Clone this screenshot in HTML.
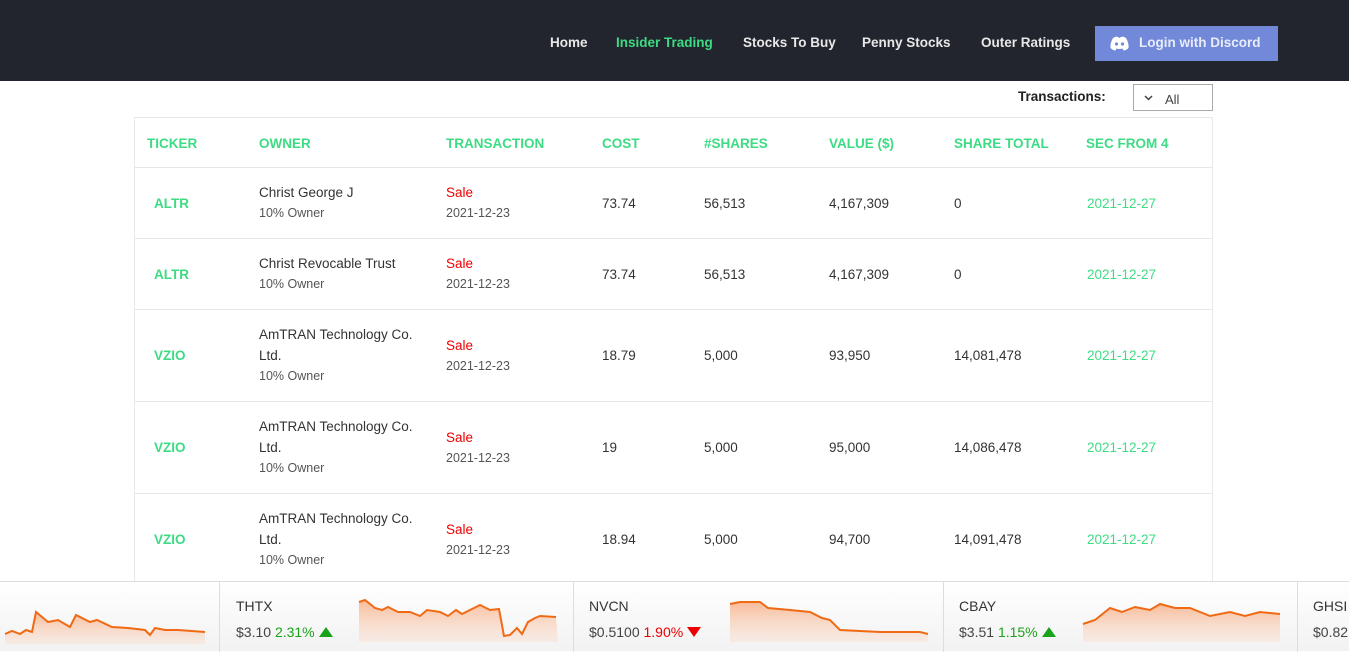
<!DOCTYPE html>
<html><head><style>
*{margin:0;padding:0;box-sizing:border-box}
body{width:1349px;height:651px;overflow:hidden;background:#fff;font-family:"Liberation Sans",sans-serif;position:relative;color:#333}
.nav{position:absolute;left:0;top:0;width:1349px;height:81px;background:#23252e}
.nav a{position:absolute;top:35px;color:#e8e8e8;font-weight:bold;font-size:13.5px;text-decoration:none}
.btn{position:absolute;left:1095px;top:26px;width:183px;height:35px;background:#7289da;color:#e8ecf8;font-weight:bold;font-size:13.5px;padding:9px 0 0 44px}
.tr{position:absolute;left:1018px;top:89px;font-weight:bold;font-size:13.5px;color:#222}
.sel{position:absolute;left:1133px;top:84px;width:80px;height:27px;border:1px solid #aaa;font-size:13px;color:#444;padding:7px 0 0 31px}
.tbl{position:absolute;left:134px;top:117px;width:1079px;height:470px;border:1px solid #e8e8e8;border-bottom:none}
.h{position:absolute;top:136px;color:#3ddc84;font-weight:bold;font-size:13.5px}
.line{position:absolute;left:135px;width:1077px;height:1px;background:#e6e6e6}
.c{position:absolute;font-size:13.5px;color:#333}
.tk{color:#3ddc84;font-weight:bold}
.sm{font-size:12.5px;color:#555}
.sale{color:#e00}
.g{color:#3ddc84}
.bar{position:absolute;left:0;top:581px;width:1349px;height:70px;background:linear-gradient(#fff,#f2f2f2);border-top:1px solid #ddd}
.sep{position:absolute;top:0;width:1px;height:70px;background:#ddd}
.sym{position:absolute;top:16px;font-size:14px;color:#333}
.pr{position:absolute;top:42px;font-size:14px;color:#444}
.up{display:inline-block;width:0;height:0;border-left:7px solid transparent;border-right:7px solid transparent;border-bottom:10px solid #1aa31a;vertical-align:0}
.dn{display:inline-block;width:0;height:0;border-left:7px solid transparent;border-right:7px solid transparent;border-top:10px solid #e00;vertical-align:0}
</style></head><body>
<div class="nav">
<a style="left:550px">Home</a>
<a style="left:616px;color:#3ddc84">Insider Trading</a>
<a style="left:743px">Stocks To Buy</a>
<a style="left:862px">Penny Stocks</a>
<a style="left:981px">Outer Ratings</a>
<div class="btn"><svg style="position:absolute;left:15px;top:10px" width="19" height="15" viewBox="0 0 19 15"><path d="M3 2 Q6 0 8 1 L9.5 2 L11 1 Q13 0 16 2 Q19 7 18.5 12 Q16 14.5 13.5 14.5 L12.5 12.5 Q9.5 13.5 6.5 12.5 L5.5 14.5 Q3 14.5 .5 12 Q0 7 3 2Z" fill="#fff"/><circle cx="6.5" cy="8" r="1.6" fill="#7289da"/><circle cx="12.5" cy="8" r="1.6" fill="#7289da"/></svg>Login with Discord</div>
</div>
<div class="tr">Transactions:</div>
<div class="sel"><svg style="position:absolute;left:10px;top:10px" width="9" height="6" viewBox="0 0 9 6"><path d="M1 1 L4.5 4.5 L8 1" fill="none" stroke="#444" stroke-width="1.5"/></svg>All</div>
<div class="tbl"></div>
<div class="h" style="left:147px">TICKER</div><div class="h" style="left:259px">OWNER</div><div class="h" style="left:446px">TRANSACTION</div><div class="h" style="left:602px">COST</div><div class="h" style="left:704px">#SHARES</div><div class="h" style="left:829px">VALUE ($)</div><div class="h" style="left:954px">SHARE TOTAL</div><div class="h" style="left:1086px">SEC FROM 4</div>
<div class="line" style="top:167px"></div><div class="line" style="top:238px"></div><div class="line" style="top:309px"></div><div class="line" style="top:401px"></div><div class="line" style="top:493px"></div>

<div class="c tk" style="left:154px;top:196px">ALTR</div>
<div class="c" style="left:259px;top:185px">Christ George J</div><div class="c sm" style="left:259px;top:206px">10% Owner</div>
<div class="c sale" style="left:446px;top:185px">Sale</div><div class="c sm" style="left:446px;top:206px">2021-12-23</div>
<div class="c" style="left:602px;top:196px">73.74</div><div class="c" style="left:704px;top:196px">56,513</div><div class="c" style="left:829px;top:196px">4,167,309</div><div class="c" style="left:954px;top:196px">0</div><div class="c g" style="left:1087px;top:196px">2021-12-27</div>

<div class="c tk" style="left:154px;top:267px">ALTR</div>
<div class="c" style="left:259px;top:256px">Christ Revocable Trust</div><div class="c sm" style="left:259px;top:277px">10% Owner</div>
<div class="c sale" style="left:446px;top:256px">Sale</div><div class="c sm" style="left:446px;top:277px">2021-12-23</div>
<div class="c" style="left:602px;top:267px">73.74</div><div class="c" style="left:704px;top:267px">56,513</div><div class="c" style="left:829px;top:267px">4,167,309</div><div class="c" style="left:954px;top:267px">0</div><div class="c g" style="left:1087px;top:267px">2021-12-27</div>

<div class="c tk" style="left:154px;top:348px">VZIO</div>
<div class="c" style="left:259px;top:327px">AmTRAN Technology Co.</div><div class="c" style="left:259px;top:348px">Ltd.</div><div class="c sm" style="left:259px;top:369px">10% Owner</div>
<div class="c sale" style="left:446px;top:338px">Sale</div><div class="c sm" style="left:446px;top:359px">2021-12-23</div>
<div class="c" style="left:602px;top:348px">18.79</div><div class="c" style="left:704px;top:348px">5,000</div><div class="c" style="left:829px;top:348px">93,950</div><div class="c" style="left:954px;top:348px">14,081,478</div><div class="c g" style="left:1087px;top:348px">2021-12-27</div>

<div class="c tk" style="left:154px;top:440px">VZIO</div>
<div class="c" style="left:259px;top:419px">AmTRAN Technology Co.</div><div class="c" style="left:259px;top:440px">Ltd.</div><div class="c sm" style="left:259px;top:461px">10% Owner</div>
<div class="c sale" style="left:446px;top:430px">Sale</div><div class="c sm" style="left:446px;top:451px">2021-12-23</div>
<div class="c" style="left:602px;top:440px">19</div><div class="c" style="left:704px;top:440px">5,000</div><div class="c" style="left:829px;top:440px">95,000</div><div class="c" style="left:954px;top:440px">14,086,478</div><div class="c g" style="left:1087px;top:440px">2021-12-27</div>

<div class="c tk" style="left:154px;top:532px">VZIO</div>
<div class="c" style="left:259px;top:511px">AmTRAN Technology Co.</div><div class="c" style="left:259px;top:532px">Ltd.</div><div class="c sm" style="left:259px;top:553px">10% Owner</div>
<div class="c sale" style="left:446px;top:522px">Sale</div><div class="c sm" style="left:446px;top:543px">2021-12-23</div>
<div class="c" style="left:602px;top:532px">18.94</div><div class="c" style="left:704px;top:532px">5,000</div><div class="c" style="left:829px;top:532px">94,700</div><div class="c" style="left:954px;top:532px">14,091,478</div><div class="c g" style="left:1087px;top:532px">2021-12-27</div>

<div class="bar">
<svg style="position:absolute;left:0;top:0" width="1349" height="70">
<defs><linearGradient id="f" x1="0" y1="0" x2="0" y2="1"><stop offset="0" stop-color="#f7a070" stop-opacity=".7"/><stop offset="1" stop-color="#fbd5bf" stop-opacity=".3"/></linearGradient></defs>
<path d="M5 52 L12 49 L20 52 L26 48 L32 50 L36 30 L42 35 L48 40 L58 38 L70 45 L76 33 L90 40 L97 38 L112 45 L128 46 L145 48 L150 53 L155 46 L165 48 L178 48 L205 50 L205 62 L5 62Z" fill="url(#f)"/>
<path d="M5 52 L12 49 L20 52 L26 48 L32 50 L36 30 L42 35 L48 40 L58 38 L70 45 L76 33 L90 40 L97 38 L112 45 L128 46 L145 48 L150 53 L155 46 L165 48 L178 48 L205 50" fill="none" stroke="#f06a14" stroke-width="2"/>
<path d="M359 20 L365 18 L375 26 L382 28 L388 25 L398 30 L410 30 L420 34 L427 28 L440 30 L448 34 L456 28 L462 32 L470 28 L480 23 L490 28 L499 27 L504 54 L510 53 L517 46 L522 52 L528 40 L535 36 L540 34 L556 35 L558 60 L359 60Z" fill="url(#f)"/>
<path d="M359 20 L365 18 L375 26 L382 28 L388 25 L398 30 L410 30 L420 34 L427 28 L440 30 L448 34 L456 28 L462 32 L470 28 L480 23 L490 28 L499 27 L504 54 L510 53 L517 46 L522 52 L528 40 L535 36 L540 34 L556 35" fill="none" stroke="#f06a14" stroke-width="2"/>
<path d="M730 22 L740 20 L760 20 L768 26 L790 28 L810 30 L822 36 L830 38 L840 48 L880 50 L920 50 L928 52 L928 60 L730 60Z" fill="url(#f)"/>
<path d="M730 22 L740 20 L760 20 L768 26 L790 28 L810 30 L822 36 L830 38 L840 48 L880 50 L920 50 L928 52" fill="none" stroke="#f06a14" stroke-width="2"/>
<path d="M1083 42 L1095 38 L1110 26 L1122 30 L1135 25 L1150 28 L1160 22 L1175 26 L1190 26 L1210 34 L1230 30 L1245 34 L1260 30 L1280 32 L1280 60 L1083 60Z" fill="url(#f)"/>
<path d="M1083 42 L1095 38 L1110 26 L1122 30 L1135 25 L1150 28 L1160 22 L1175 26 L1190 26 L1210 34 L1230 30 L1245 34 L1260 30 L1280 32" fill="none" stroke="#f06a14" stroke-width="2"/>
</svg>
<div class="sep" style="left:219px"></div><div class="sep" style="left:573px"></div><div class="sep" style="left:943px"></div><div class="sep" style="left:1297px"></div>
<div class="sym" style="left:236px">THTX</div><div class="pr" style="left:236px">$3.10 <span style="color:#1aa31a">2.31%</span> <span class="up"></span></div>
<div class="sym" style="left:589px">NVCN</div><div class="pr" style="left:589px">$0.5100 <span style="color:#e00">1.90%</span> <span class="dn"></span></div>
<div class="sym" style="left:959px">CBAY</div><div class="pr" style="left:959px">$3.51 <span style="color:#1aa31a">1.15%</span> <span class="up"></span></div>
<div class="sym" style="left:1313px">GHSI</div><div class="pr" style="left:1313px">$0.82</div>
</div>
</body></html>
